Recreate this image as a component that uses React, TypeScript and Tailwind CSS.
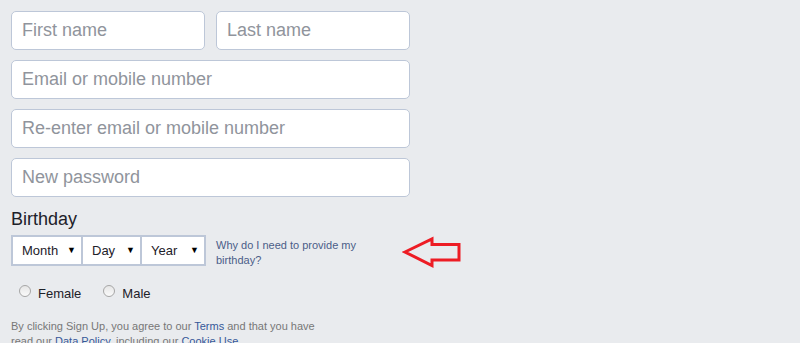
import { useState } from "react";

const inputCls =
  "h-[39px] w-full rounded-[5px] border border-[#bdc7d8] bg-white px-[10px] text-[18px] text-[#1d2129] outline-none placeholder:text-[#90949c]";

function Arrow() {
  return (
    <svg width="62" height="34" viewBox="0 0 62 34" className="block">
      <polygon
        points="3,16 30,3 30,8.5 57,8.5 57,24 30,24 30,29.5"
        fill="none"
        stroke="#ed1c24"
        strokeWidth="3"
        strokeLinejoin="miter"
      />
    </svg>
  );
}

function Select({ label, width }: { label: string; width: string }) {
  return (
    <div
      className={`flex h-full items-center justify-between bg-white pl-[9px] pr-[5px] text-[13px] text-[#1d2129] ${width}`}
    >
      <span>{label}</span>
      <span className="text-[9px] text-black">▼</span>
    </div>
  );
}

function Radio({ label }: { label: string }) {
  return (
    <label className="flex items-center gap-[7px]">
      <span className="mt-[-5px] h-[12px] w-[12px] rounded-full border border-[#a6a6a6] bg-gradient-to-b from-[#e6e6e6] to-[#fafafa]" />
      <span className="text-[13px] text-[#1d2129]">{label}</span>
    </label>
  );
}

export default function App() {
  const [names] = useState(["First name", "Last name"]);

  return (
    <div
      className="h-[343px] w-[800px] overflow-hidden bg-[#e9ebee] pl-[11px] pt-[11px]"
      style={{ fontFamily: '"Liberation Sans", Arial, sans-serif' }}
    >
      <div className="flex w-[399px] flex-col gap-[10px]">
        <div className="flex gap-[11px]">
          {names.map((n) => (
            <input key={n} className={inputCls} placeholder={n} />
          ))}
        </div>
        <input className={inputCls} placeholder="Email or mobile number" />
        <input className={inputCls} placeholder="Re-enter email or mobile number" />
        <input className={inputCls} placeholder="New password" />
      </div>

      <div className="mt-[10px] text-[18px] leading-[24px] text-[#1d2129]">Birthday</div>

      <div className="mt-[4px] flex items-start">
        <div className="flex h-[31px] gap-[2px] border-2 border-[#bdc7d8] bg-[#bdc7d8]">
          <Select label="Month" width="w-[68px]" />
          <Select label="Day" width="w-[57px]" />
          <Select label="Year" width="w-[62px]" />
        </div>
        <div className="ml-[10px] mt-[3px] w-[150px] text-[11px] leading-[15px] text-[#4b5d88]">
          Why do I need to provide my birthday?
        </div>
        <div className="ml-[36px] mt-[1px]">
          <Arrow />
        </div>
      </div>

      <div className="ml-[8px] mt-[14px] flex gap-[22px]">
        <Radio label="Female" />
        <Radio label="Male" />
      </div>

      <p className="mt-[15px] w-[320px] text-[11px] leading-[15px] text-[#777]">
        By clicking Sign Up, you agree to our <span className="text-[#365899]">Terms</span> and
        that you have read our <span className="text-[#365899]">Data Policy</span>, including our{" "}
        <span className="text-[#365899]">Cookie Use</span>.
      </p>
    </div>
  );
}
